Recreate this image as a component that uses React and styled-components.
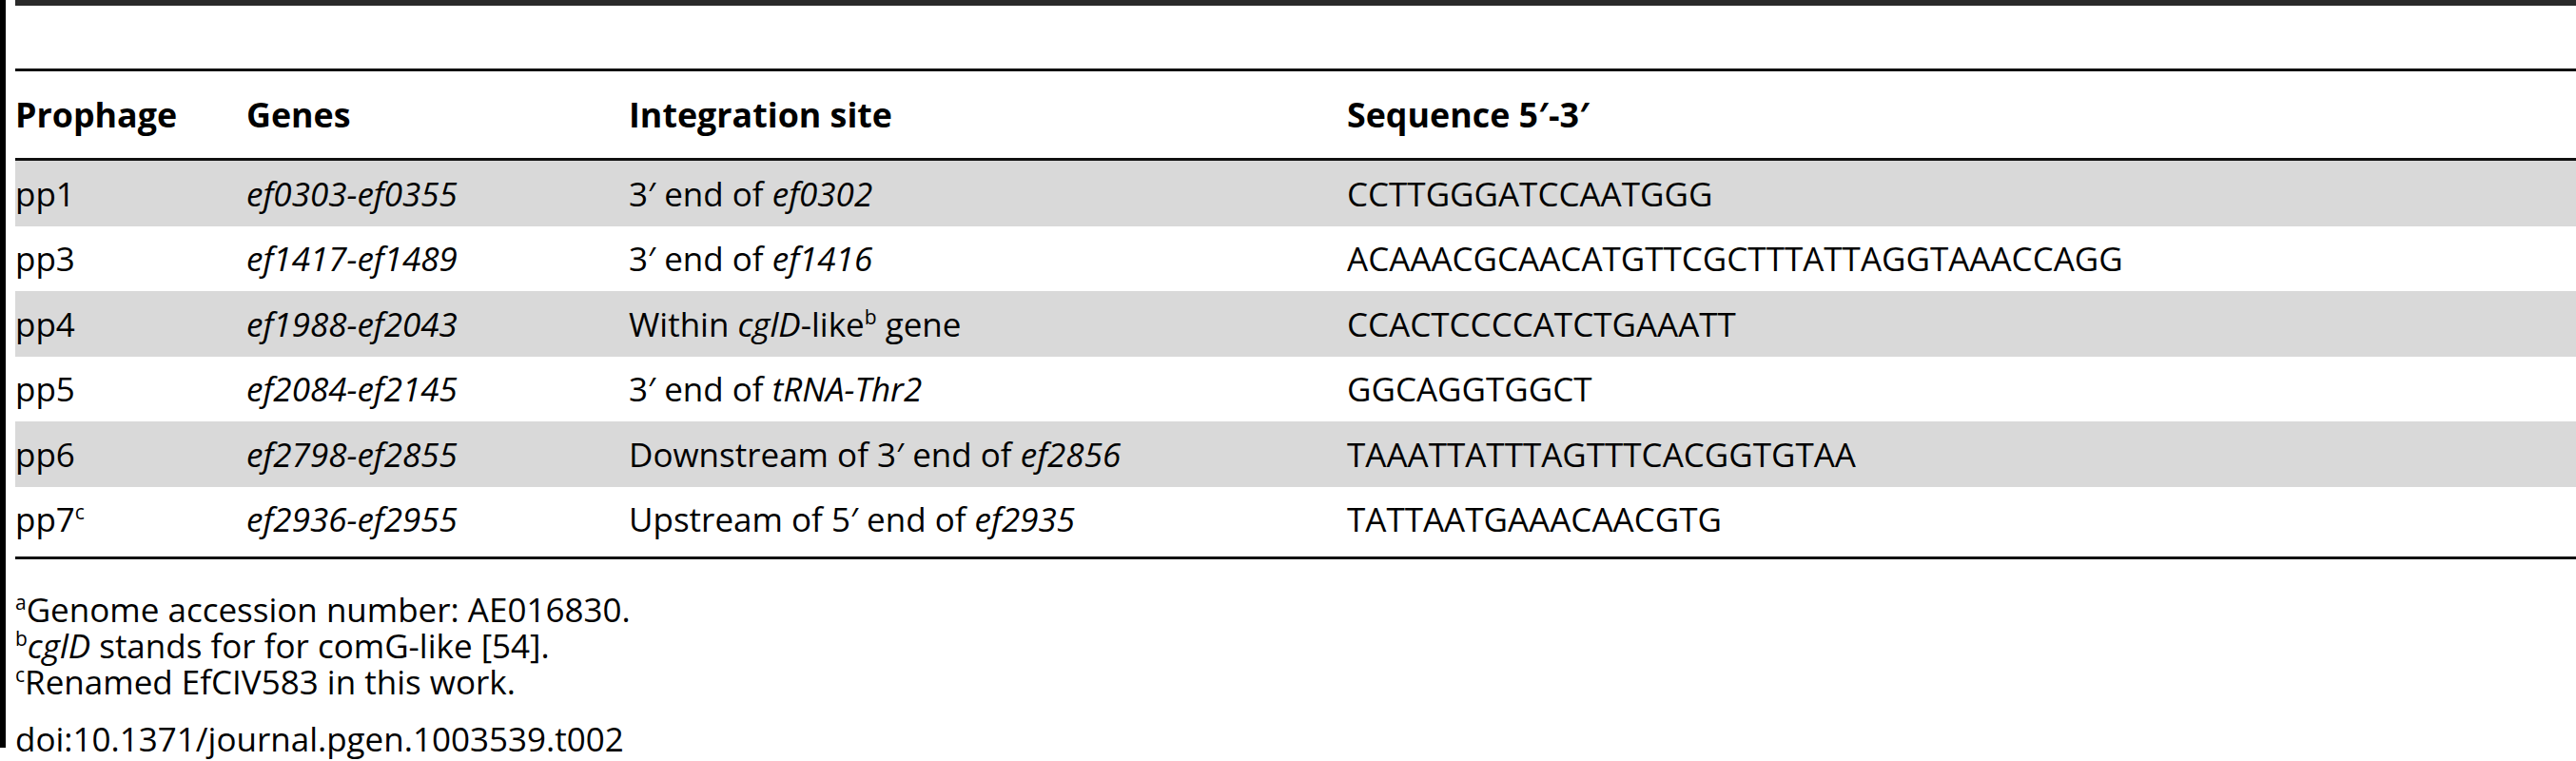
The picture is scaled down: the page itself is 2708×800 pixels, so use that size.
import React from "react";
import styled, { createGlobalStyle } from "styled-components";

const Global = createGlobalStyle`
  html, body { margin: 0; padding: 0; background: #fff; }
  body { font-family: "Open Sans", "Liberation Sans", sans-serif; color: #000; }
`;

const Frame = styled.div`
  display: flex;
  width: 2708px;
  height: 800px;
  overflow: hidden;
`;

const LeftBar = styled.div`
  width: 6px;
  height: 786px;
  background: #000;
  flex: none;
`;

const Content = styled.div`
  flex: 1;
  padding-left: 10px;
  display: flex;
  flex-direction: column;
`;

const Rule = styled.div`
  height: ${(p) => p.$h || 3}px;
  background: ${(p) => p.$c || "#111"};
  margin-top: ${(p) => p.$mt || 0}px;
  flex: none;
`;

const Grid = styled.div`
  display: grid;
  grid-template-columns: 243px 402px 755px 1fr;
  align-items: center;
  height: ${(p) => p.$h}px;
  background: ${(p) => (p.$shade ? "#d9d9d9" : "transparent")};
  font-size: ${(p) => (p.$head ? 35.8 : 35)}px;
  font-weight: ${(p) => (p.$head ? 700 : 400)};
  white-space: nowrap;
  flex: none;
`;

const Cell = styled.div`
  line-height: 1;
`;

const I = styled.i`
  font-style: italic;
`;

const Sup = styled.sup`
  font-size: 0.6em;
  vertical-align: 0;
  position: relative;
  top: -0.62em;
  line-height: 0;
`;

const Notes = styled.div`
  margin-top: 34px;
  font-size: 35px;
  line-height: 38px;
`;

const Note = styled.div`
  white-space: nowrap;
`;

const Doi = styled.div`
  margin-top: 22px;
  white-space: nowrap;
`;

const rows = [
  ["pp1", "ef0303-ef0355", <>3′ end of <I>ef0302</I></>, "CCTTGGGATCCAATGGG"],
  ["pp3", "ef1417-ef1489", <>3′ end of <I>ef1416</I></>, "ACAAACGCAACATGTTCGCTTTATTAGGTAAACCAGG"],
  ["pp4", "ef1988-ef2043", <>Within <I>cglD</I>-like<Sup>b</Sup> gene</>, "CCACTCCCCATCTGAAATT"],
  ["pp5", "ef2084-ef2145", <>3′ end of <I>tRNA-Thr2</I></>, "GGCAGGTGGCT"],
  ["pp6", "ef2798-ef2855", <>Downstream of 3′ end of <I>ef2856</I></>, "TAAATTATTTAGTTTCACGGTGTAA"],
  [<>pp7<Sup>c</Sup></>, "ef2936-ef2955", <>Upstream of 5′ end of <I>ef2935</I></>, "TATTAATGAAACAACGTG"],
];

export default function App() {
  return (
    <>
      <Global />
      <Frame>
        <LeftBar />
        <Content>
          <Rule $h={6} $c="#2a2a2a" />
          <Rule $h={3} $mt={66} />
          <Grid $h={91} $head>
            <Cell>Prophage</Cell>
            <Cell>Genes</Cell>
            <Cell>Integration site</Cell>
            <Cell>Sequence 5′-3′</Cell>
          </Grid>
          <Rule $h={3} />
          {rows.map((r, i) => (
            <Grid key={i} $h={68.5} $shade={i % 2 === 0}>
              <Cell>{r[0]}</Cell>
              <Cell><I>{r[1]}</I></Cell>
              <Cell>{r[2]}</Cell>
              <Cell>{r[3]}</Cell>
            </Grid>
          ))}
          <Rule $h={3} $mt={5} />
          <Notes>
            <Note><Sup>a</Sup>Genome accession number: AE016830.</Note>
            <Note><Sup>b</Sup><I>cglD</I> stands for for comG-like [54].</Note>
            <Note><Sup>c</Sup>Renamed EfCIV583 in this work.</Note>
            <Doi>doi:10.1371/journal.pgen.1003539.t002</Doi>
          </Notes>
        </Content>
      </Frame>
    </>
  );
}
